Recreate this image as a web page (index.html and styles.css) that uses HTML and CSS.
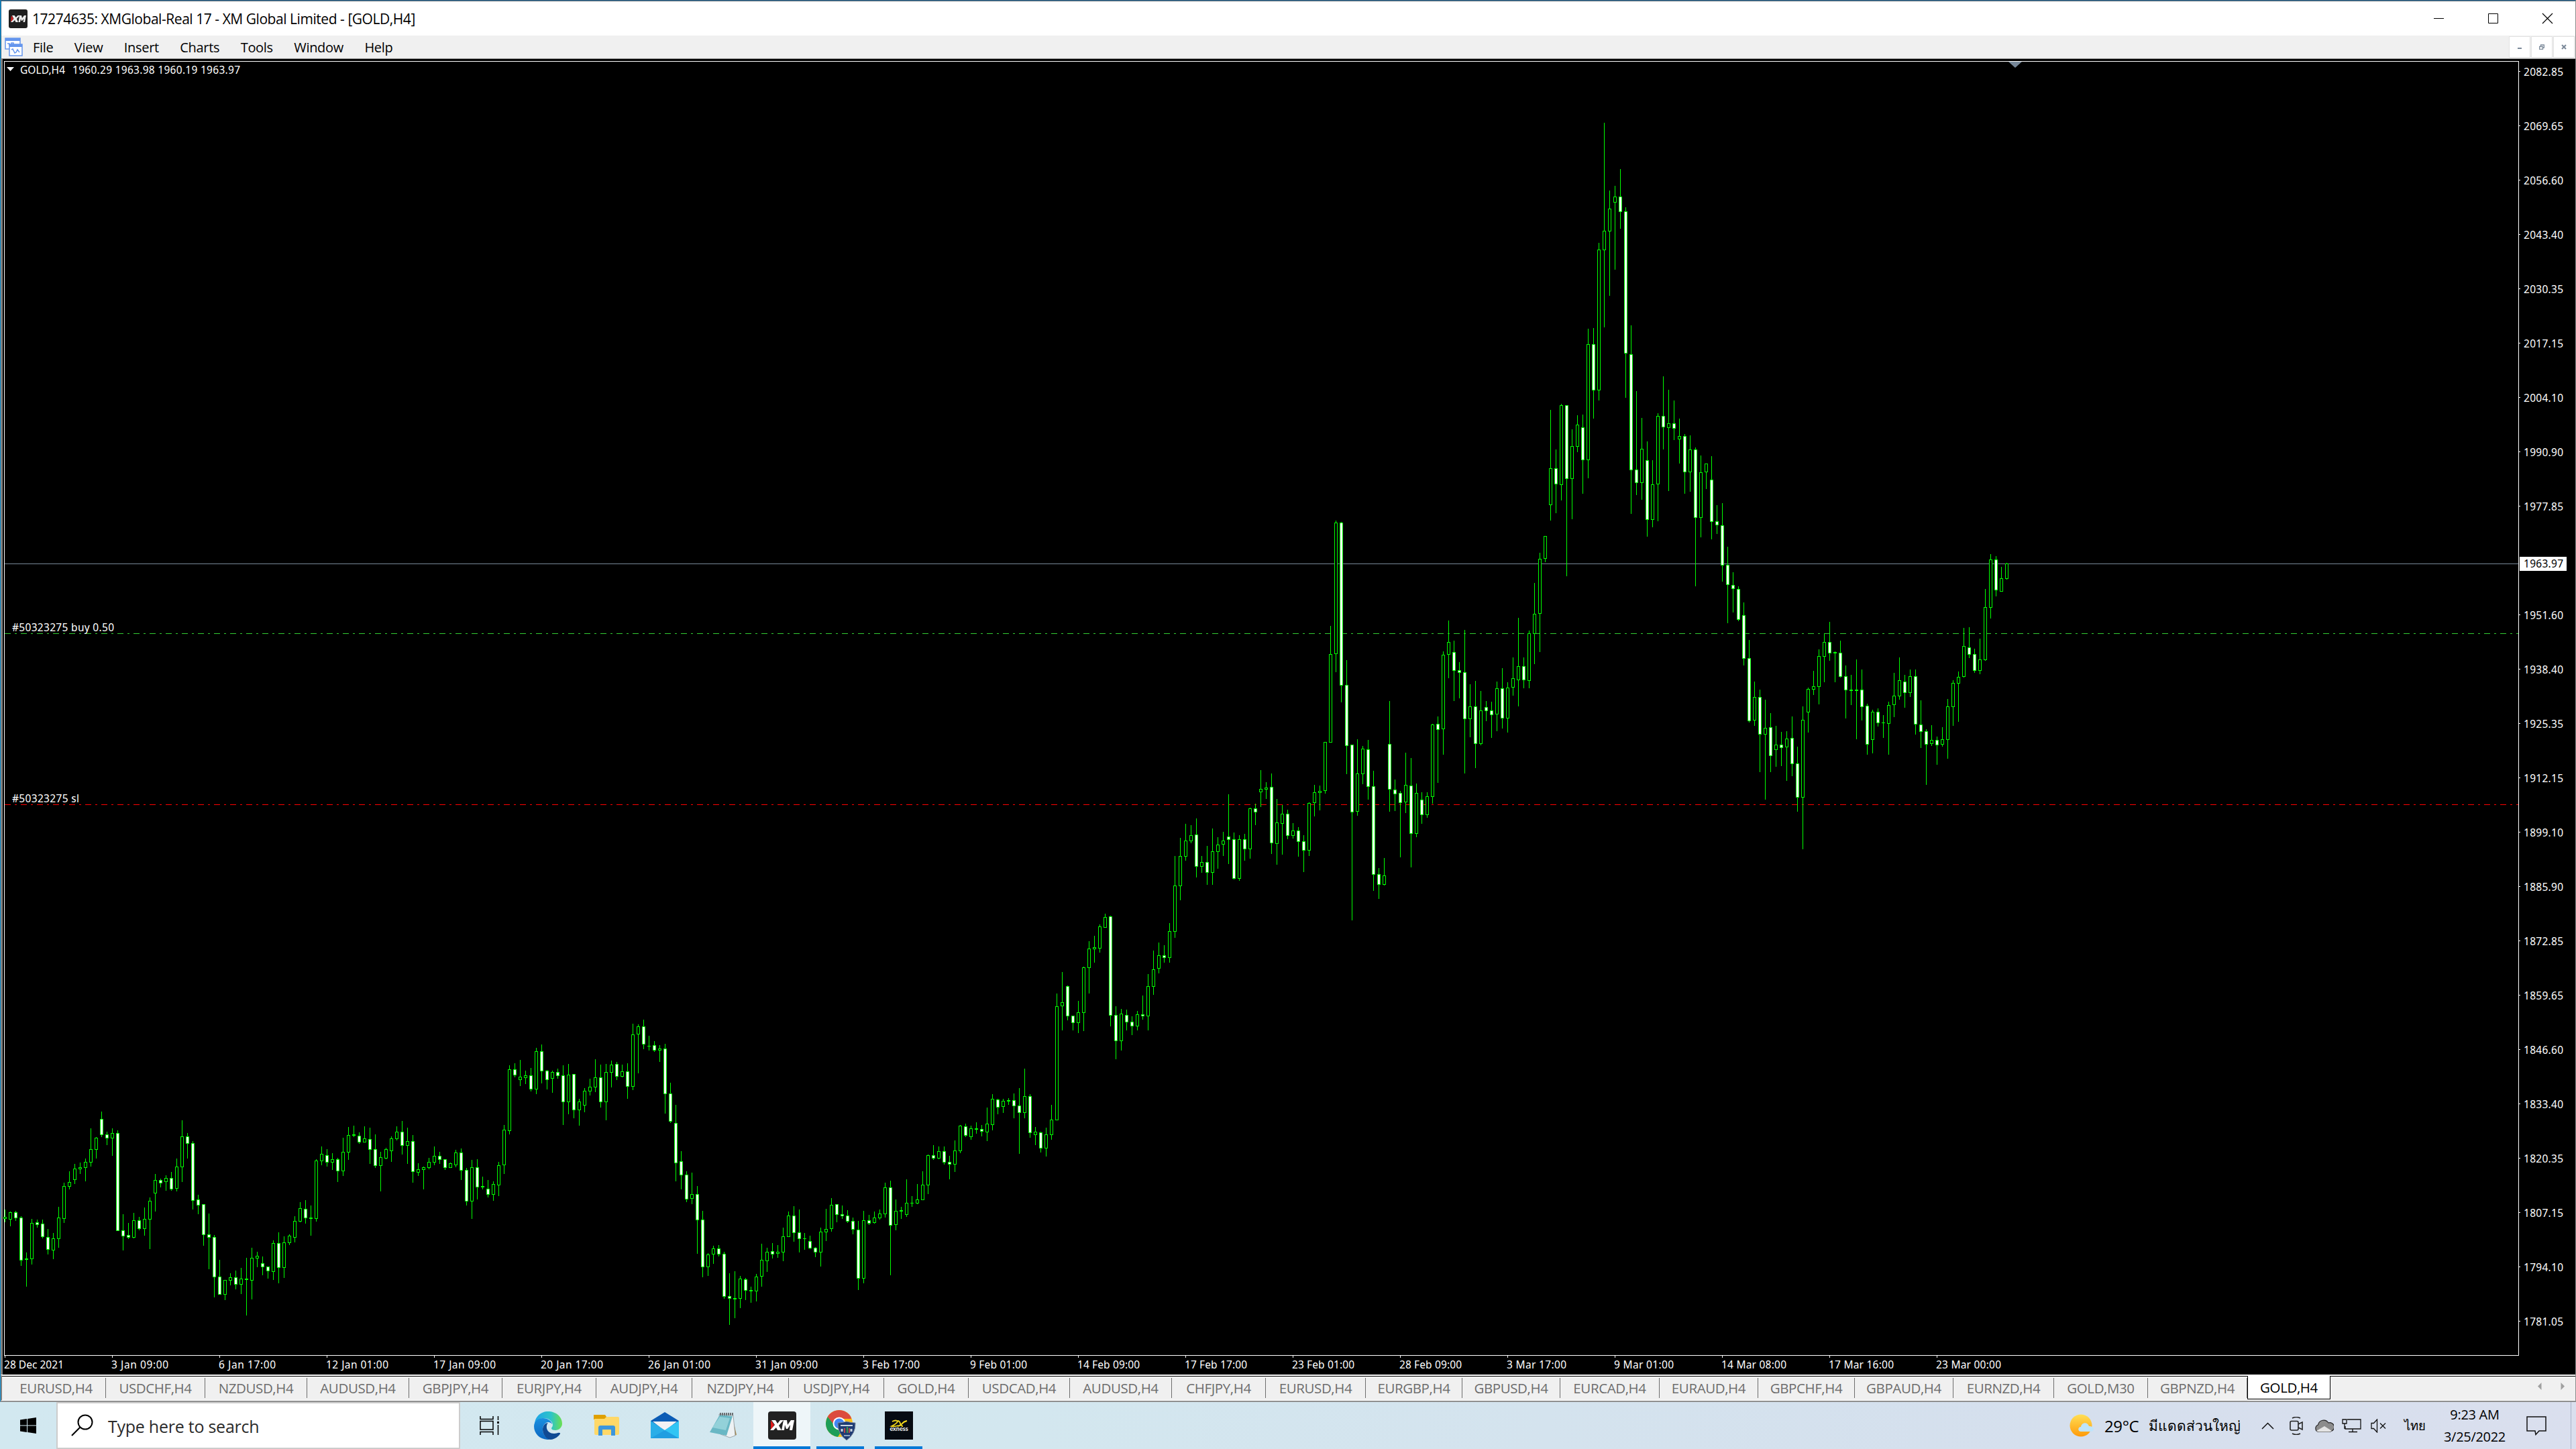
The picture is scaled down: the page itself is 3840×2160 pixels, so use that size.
FILE: index.html
```html
<!DOCTYPE html>
<html lang="en">
<head>
  <meta charset="UTF-8">
  <title>17274635: XMGlobal-Real 17 - XM Global Limited - [GOLD,H4]</title>
  <link rel="stylesheet" href="styles.css">
</head>
<body>
  <div class="window">
    <div class="titlebar">
      <svg class="app-icon" width="28" height="28" viewBox="0 0 28 28">
        <rect width="28" height="28" rx="3" fill="#1e1e1e"/>
        <path d="M4 9l3 5-4 5z" fill="#e02020"/>
        <path d="M5 9h3.600l2 3 3-3h3L12 14l2 5h-3.500l-1.500-3-3 3H3l4.500-5zM16 9h3l1 4 3-4h3l-2 10h-2.500l1-5-2.500 3h-1l-1-3-1 5h-2.500z" fill="#eee"/>
      </svg>
      <span class="title-text">17274635: XMGlobal-Real 17 - XM Global Limited - [GOLD,H4]</span>
      <svg class="win-buttons" width="180" height="18" viewBox="0 0 180 18">
        <path d="M0 8.500h15M81.500 1.500h14v14h-14z" fill="none" stroke="#000" stroke-width="1"/>
        <path d="M162 1l15 15M177 1l-15 15" fill="none" stroke="#000" stroke-width="1.200"/>
      </svg>
    </div>

    <div class="menubar">
      <svg class="mdi-icon" width="28" height="28" viewBox="0 0 28 28">
        <path d="M1 1h22v16H1z" fill="#fff" stroke="#6495ed" stroke-width="1.500"/>
        <path d="M1 1h22v4H1z" fill="#6495ed"/>
        <path d="M4 9h3v2h3v-3h3v2" fill="none" stroke="#6495ed" stroke-width="1.500"/>
        <path d="M7 10h19v17H7z" fill="#fff" stroke="#6495ed" stroke-width="1.500"/>
        <path d="M7 10h19v4H7z" fill="#6495ed"/>
        <path d="M10 18l2-1 3 6 2-1 2-4 3 4" fill="none" stroke="#6495ed" stroke-width="1.500"/>
      </svg>
      <nav class="menu">
        <span>File</span><span>View</span><span>Insert</span><span>Charts</span><span>Tools</span><span>Window</span><span>Help</span>
      </nav>
      <div class="mdi-buttons">
        <span class="mdi-btn"><svg width="8" height="8"><path d="M1 5h6v2H1z" fill="#7b8999"/></svg></span>
        <span class="mdi-btn"><svg width="8" height="8"><path d="M2.500 3V1h5v4H6M.5 3.500h5v4h-5z" fill="none" stroke="#7b8999" stroke-width="1.300"/></svg></span>
        <span class="mdi-btn"><svg width="8" height="8"><path d="M1 1l6 6M7 1L1 7" stroke="#7b8999" stroke-width="2"/></svg></span>
      </div>
    </div>

    <div class="chart-pane">
      <svg id="chart" width="3834" height="1961" viewBox="4 88 3834 1961">
        <rect x="4" y="88" width="3834" height="1961" fill="#000"/>
        <path class="frame" d="M6.500 2020V91.500H3754.500V2020.500H6"/>
        <path d="M2994 92h20l-10 9z" fill="#778899"/>
        <path class="price-line" d="M7 840.500H3754"/>
        <path class="order-line buy" d="M7 944.500H3754"/>
        <path class="order-line sl" d="M7 1199.500H3754"/>
        <g id="candles"></g>
        <path d="M10 100h11l-5.500 6z" fill="#fff"/>
        <text x="30" y="110" textLength="67">GOLD,H4</text>
        <text x="108" y="110" textLength="250">1960.29 1963.98 1960.19 1963.97</text>
        <text x="18" y="941" textLength="152">#50323275 buy 0.50</text>
        <text x="18" y="1196" textLength="100">#50323275 sl</text>
        <g id="prices"></g>
        <g id="times"></g>
        <rect x="3756" y="830" width="70" height="21" fill="#fff"/>
        <text class="last" x="3762" y="846" textLength="59">1963.97</text>
      </svg>
    </div>

    <div class="tabs" id="tabs"></div>
  </div>

  <div class="taskbar">
    <div class="start">
      <svg width="24" height="24" viewBox="0 0 24 24"><path d="M0 3.500l10-1.400v9.400H0zM11 2l13-2v11.500H11zM0 12.500h10v9.400L0 20.500zM11 12.500h13V24l-13-2z" fill="#000"/></svg>
    </div>
    <div class="search">
      <svg width="34" height="34" viewBox="0 0 34 34"><circle cx="21" cy="12" r="10.500" fill="none" stroke="#000" stroke-width="2"/><path d="M13.500 19.500L1 32" stroke="#000" stroke-width="2.200"/></svg>
      <span>Type here to search</span>
    </div>
    <div class="apps">
      <div class="app taskview">
        <svg width="30" height="28" viewBox="0 0 30 28"><path d="M1 0v4.500h19V0M1 28v-4.500h19V28M1 7.500h19v12.500H1zM27.500 0v6M27.500 13v15" fill="none" stroke="#000" stroke-width="1.500"/><rect x="26" y="8" width="3" height="3"/></svg>
      </div>
      <div class="app">
        <svg width="42" height="42" viewBox="0 0 42 42">
          <defs>
            <linearGradient id="eg1" x1="0" x2="1"><stop offset="0" stop-color="#1fa4e8"/><stop offset=".6" stop-color="#2ec4c8"/><stop offset="1" stop-color="#6be04f"/></linearGradient>
            <linearGradient id="eg2" x1="0" y1="0" x2="0" y2="1"><stop offset="0" stop-color="#1a8fe0"/><stop offset="1" stop-color="#0b66c0"/></linearGradient>
          </defs>
          <path d="M1 20C1 8 10 0 21 0c12 0 21 8 21 18 0 6-5 10-10 10-4 0-6-1-6-3 0-1 2-2 2-5 0-5-6-10-13-10C8 10 3 14 1 20z" fill="url(#eg1)"/>
          <path d="M0 22c0-8 7-12 13-12 8 0 14 5 14 9-1-2-4-3-6-3-4 0-8 5-8 11 0 7 5 13 11 15C10 43 0 34 0 22z" fill="url(#eg2)"/>
          <path d="M13 27c0-6 4-10 8-10-4 4-3 16 9 16 4 0 6-2 8-1 2 0 1 2-1 4-4 4-9 6-13 6-6-1-11-8-11-15z" fill="#0f4a94"/>
        </svg>
      </div>
      <div class="app">
        <svg width="38" height="32" viewBox="0 0 38 32"><path d="M0 0h17l2 3v4H0z" fill="#dfa000"/><path d="M1 6h15l3-3h17q2 0 2 2v23q0 2-2 2H3q-2 0-2-2z" fill="#ffd868"/><path d="M7 31V19q0-3 3-3h19q3 0 3 3v12h-6v-9H13v9z" fill="#3c96dc"/></svg>
      </div>
      <div class="app">
        <svg width="42" height="40" viewBox="0 0 42 40"><path d="M0 13L21 0l21 13v9H0z" fill="#0b5cb5"/><path d="M3 14h36L21 28z" fill="#f2f2f4"/><path d="M0 13l21 14 21-14v26H0z" fill="#2aaee8"/><path d="M21 27l21-14v26z" fill="#31c5f4"/><path d="M21 27l21 12H0z" fill="#1b93dc" opacity=".6"/></svg>
      </div>
      <div class="app">
        <svg width="40" height="38" viewBox="0 0 40 38"><path d="M33 3l7 30-6 2z" fill="#a98b50"/><path d="M14 2l21 2 3 30-8 3-14-5z" fill="#eef2f4" stroke="#8a949a" stroke-width=".8"/><path d="M15 3l19 2-9 29L0 29z" fill="#69b7c4"/><path d="M15 6l15 2-6 18L4 22z" fill="#a5dbe2" opacity=".7"/><path d="M15 2h20" stroke="#6a6f72" stroke-width="4" stroke-dasharray="2 1"/></svg>
      </div>
      <div class="app active xm">
        <svg width="42" height="42" viewBox="0 0 42 42"><rect width="42" height="42" rx="4" fill="#222"/><path d="M4 13l5 7-5 8z" fill="#e01b1b"/><path d="M5 13h6l3 5 4-5h5l-7 8 4 7h-6l-2-4-4 4H3l7-8zM23 13h5l1 7 5-7h5l-3 15h-4l1-8-4 6h-2l-2-6-1 8h-4z" fill="#fff"/></svg>
      </div>
      <div class="app running chrome">
        <svg width="46" height="46" viewBox="0 0 46 46">
          <circle cx="20" cy="20" r="20" fill="#fbc117"/>
          <path d="M2.700 10A20 20 0 0 1 37.300 10L38 13H20L12 24z" fill="#dc4b3e"/>
          <path d="M2.700 10A20 20 0 0 0 18 40l9-15-13-1z" fill="#1e9e58"/>
          <circle cx="20" cy="20" r="9.500" fill="#fff"/><circle cx="20" cy="20" r="7.500" fill="#4285f4"/>
          <path d="M18 19q6 0 13-2 7 2 13 2 1 16-13 26-14-10-13-26z" fill="#1f3c74" stroke="#7d8a9c"/>
          <path d="M22 23h18" stroke="#c9d5e0" stroke-width="2"/><path d="M24 28v4M38 28v4" stroke="#c9d5e0" stroke-width="3"/><path d="M28 27v7" stroke="#b94a48" stroke-width="2"/><path d="M32 25v9" stroke="#3f9a4c" stroke-width="2"/><path d="M35 27v7" stroke="#b94a48" stroke-width="2"/><path d="M27 38h9" stroke="#8fa6bf" stroke-width="2"/>
        </svg>
      </div>
      <div class="app running">
        <svg width="42" height="42" viewBox="0 0 42 42"><rect width="42" height="42" fill="#060b12"/><path d="M11 15q6-3 8 0-1 3-9 7 5 1 10-1M19 14q3 0 4 4 1 4 4 4M33 14q-5 1-8 5-3 3-6 3" fill="none" stroke="#f5d91c" stroke-width="1.800"/><text x="21" y="29" class="exness">exness</text></svg>
      </div>
    </div>
    <div class="tray">
      <svg class="t-sun" width="37" height="34" viewBox="0 0 37 34"><defs><linearGradient id="sun" x1="0" y1="0" x2="0" y2="1"><stop offset="0" stop-color="#ffdf55"/><stop offset="1" stop-color="#ff9a0a"/></linearGradient></defs><circle cx="17" cy="17" r="16.500" fill="url(#sun)"/><path d="M17 26c-5 0-5-7 0-7 1-7 10-8 12-1 9 0 9 8 2 8z" fill="#bfe4fa"/></svg>
      <span class="t-temp">29°C</span>
      <span class="t-cond">มีแดดส่วนใหญ่</span>
      <svg class="t-up" width="19" height="11"><path d="M1 10l8.500-8.500L18 10" fill="none" stroke="#111" stroke-width="1.500"/></svg>
      <svg class="t-cam" width="21" height="27" viewBox="0 0 21 27" fill="none" stroke="#222" stroke-width="1.600"><rect x="1" y="6.500" width="12" height="13.500" rx="2"/><path d="M13 11l6-3v11l-6-3M4 2q6-3 12 0M4 25q6 3 12 0"/></svg>
      <svg class="t-cloud" width="29" height="21" viewBox="0 0 29 21"><path d="M6 19.500a5.500 5.500 0 0 1-.5-10.500A8.500 8.500 0 0 1 21 6a6.500 6.500 0 0 1 4 12.500l-2 1z" fill="#8c8c8c" stroke="#222" stroke-width="1.200"/><path d="M3 18l12-7 11 7-3 1.500H6z" fill="#e4e4e4"/></svg>
      <svg class="t-net" width="29" height="21" viewBox="0 0 29 21" fill="none" stroke="#111" stroke-width="1.300"><path d="M8 1h20v14H5V11M16 15v4M10 19.500h13M1 1h6v6H1zM4 7v8"/></svg>
      <svg class="t-vol" width="24" height="21" viewBox="0 0 24 21" fill="none" stroke="#111" stroke-width="1.300"><path d="M1 6.500h3.500l5-5.500v19l-5-5.500H1zM14 6.500l8 8M22 6.500l-8 8"/></svg>
      <span class="t-lang">ไทย</span>
      <div class="clock"><span class="c-time">9:23 AM</span><span class="c-date">3/25/2022</span></div>
      <svg class="t-note" width="30" height="29" viewBox="0 0 30 29"><path d="M1 1h28v21H19l-5 5.500-1-5.500H1z" fill="none" stroke="#111" stroke-width="1.500"/></svg>
      <div class="show-desktop"></div>
    </div>
  </div>

  <script src="chart.js"></script>
</body>
</html>
```
FILE: styles.css
```css
* {
  box-sizing: border-box;
}
html, body {
  margin: 0;
  width: 3840px;
  height: 2160px;
  overflow: hidden;
}
body {
  display: flex;
  flex-direction: column;
  background: #1c6590;
  font-family: "Open Sans", "Noto Sans", sans-serif;
  font-size: 20px;
  color: #000;
}
.window {
  height: 2090px;
  flex: none;
  display: flex;
  flex-direction: column;
  border-top: 1px solid #24618c;
  border-left: 1px solid #0a8ccf;
  border-right: 1px solid #8a8a8a;
  border-bottom: 2px solid #8f8f8f;
}

/* title bar */
.titlebar {
  height: 52px;
  border-top: 1px solid #5d6b75;
  border-left: 1px solid #2b5f80;
  background: #fff;
  display: flex;
  align-items: center;
  padding: 1px 31px 0 11px;
}
.title-text {
  margin-left: 7px;
  font-size: 21px;
  letter-spacing: -0.45px;
  white-space: pre;
}
.win-buttons {
  margin-left: auto;
}

/* menu */
.menubar {
  height: 34px;
  background: #f0f0f0;
  border-left: 1px solid #2b5f80;
  display: flex;
  align-items: center;
  padding-left: 5px;
}
.menu {
  display: flex;
  gap: 31.4px;
  margin-left: 14px;
  letter-spacing: -0.3px;
}
.mdi-buttons {
  margin-left: auto;
  display: flex;
  gap: 1px;
  padding-right: 1px;
}
.mdi-btn {
  width: 32px;
  height: 32px;
  background: #fff;
  border: 1px solid #e3e3e3;
  display: flex;
  align-items: center;
  justify-content: center;
}

/* chart */
.chart-pane {
  flex: none;
  height: 1962px;
  border-top: 1px solid #8c8c8c;
  border-left: 3px solid #808080;
  background: #000;
}
#chart {
  display: block;
}
#chart text {
  font-family: "Noto Sans", sans-serif;
  font-size: 15.5px;
  fill: #fff;
}
#chart .last {
  fill: #000;
}
.frame {
  fill: none;
  stroke: #fff;
}
.price-line {
  stroke: #778899;
}
.order-line {
  stroke-dasharray: 9 6 3 6;
}
.buy {
  stroke: #32cd32;
}
.sl {
  stroke: #ff0000;
}
#candles, .frame, .price-line, .order-line {
  shape-rendering: crispEdges;
}
#candles .wick {
  fill: #00ff00;
}
#candles .up {
  fill: #000;
  stroke: #00ff00;
}
#candles .down {
  fill: #fff;
  stroke: #00ff00;
}

/* chart tabs */
.tabs {
  flex: 1;
  display: flex;
  background: #f0f0f0;
  border-top: 2px solid #fff;
  border-bottom: 1px solid #fff;
  border-left: 2px solid #808080;
  color: #6d6d6d;
  font-size: 20.500px;
}
.tab {
  flex: none;
  height: 35px;
  border-top: 1px solid #000;
  display: flex;
  align-items: center;
  justify-content: center;
  letter-spacing: -0.4px;
}
.tab:first-child {
  padding-left: 7px;
}
.tab::after {
  content: "";
  width: 1px;
  height: 30px;
  background: #6d6d6d;
  margin-left: auto;
}
.tab span {
  margin-left: auto;
}
.tab.current {
  background: #fff;
  color: #000;
  border: 1px solid #000;
  border-top: none;
}
.tab.current::after {
  width: 0;
}
.tab-arrows {
  flex: 1;
  height: 35px;
  border-top: 1px solid #000;
  padding: 9px 16px 0 0;
}
.tab-arrows svg {
  display: block;
  margin-left: auto;
}

/* taskbar */
.taskbar {
  height: 70px;
  display: flex;
  background: linear-gradient(90deg, #d2e8f0 0%, #d3e7ef 40%, #d5dfed 80%, #dadfee 100%);
}
.start {
  width: 84px;
  display: flex;
  align-items: center;
  justify-content: center;
}
.search {
  width: 602px;
  border: 2px solid #ccc;
  background: #fff;
  display: flex;
  align-items: center;
  padding-left: 20px;
  font-size: 25px;
  color: #2b2b2b;
}
.search span {
  margin: 2px 0 0 21px;
  letter-spacing: -0.25px;
}
.apps {
  display: flex;
}
.app {
  width: 87px;
  height: 70px;
  display: flex;
  align-items: center;
  justify-content: center;
}
.active {
  width: 85px;
  margin-left: 2px;
  background: #eef6f9;
  border-bottom: 4px solid #0078d7;
  padding-top: 4px;
}
.running {
  width: 71px;
  margin-left: 9px;
  border-bottom: 4px solid #0078d7;
  padding-top: 4px;
}
.chrome {
  padding-left: 3px;
}
.running + .running {
  margin-left: 16px;
}
.exness {
  font: bold 9px Lato, sans-serif;
  fill: #fff;
  text-anchor: middle;
}
.tray {
  margin-left: auto;
  display: flex;
  align-items: center;
  font-size: 20px;
}
.t-temp {
  margin-left: 15px;
  width: 66px;
  font-size: 24px;
  letter-spacing: -0.4px;
}
.t-cond {
  width: 136px;
  font-size: 21px;
  white-space: nowrap;
}
.t-up { margin-left: 32px; }
.t-cam { margin-left: 23px; }
.t-cloud { margin-left: 16px; }
.t-net { margin-left: 12px; }
.t-vol { margin-left: 14px; }
.t-lang {
  margin-left: 26px;
  width: 32px;
  font-size: 18.500px;
}
.clock {
  width: 126px;
  margin-left: 10px;
  display: flex;
  flex-direction: column;
  align-items: center;
  line-height: 33px;
  letter-spacing: -0.3px;
}
.t-note { margin-left: 14px; }
.show-desktop {
  width: 8px;
  height: 70px;
  margin-left: 36px;
  border-left: 1px solid #aab4c8;
}
```
FILE: chart.js
```js
var NS = 'http://www.w3.org/2000/svg';

// Bars are [high, body top, body bottom, low, filled], measured down from y in units of 1/k pixel
var runs = [
  { y: 1560, k: 1, bars: [
    [243,254,257,262,0],[246,247,258,268,0],[245,247,256,260,1],[253,255,319,327,1],[307,316,318,358,0],[257,263,317,325,0],
    [258,262,266,270,1],[258,264,284,286,1],[272,284,303,310,1],[278,286,304,317,0],[239,255,287,300,0],[203,208,257,263,0],
    [186,202,209,213,0],[175,182,199,205,0],[173,180,183,190,0],[167,172,181,201,0],[122,153,173,179,0],[135,136,154,167,0],
    [97,108,132,135,1],[127,131,137,147,1],[122,129,137,163,0],[125,129,275,275,1],[250,274,283,304,1],[263,281,285,287,1],
    [248,259,285,286,0],[254,259,272,274,1],[240,257,272,282,0],[225,230,258,302,0],[190,199,219,246,0],[197,199,204,210,1],
    [192,196,202,215,0],[187,196,213,215,1],[167,179,212,216,0],[110,134,180,202,0],[129,134,145,167,1],[141,144,230,243,1],
    [221,228,237,250,1],[235,235,281,297,1],[249,280,285,332,1],[281,284,344,374,1],[318,343,370,370,1],[348,348,370,378,0],
    [338,344,349,356,0],[334,344,355,362,1],[330,346,355,369,0],[315,346,348,401,0],[300,315,349,377,0],[306,312,316,329,0],
    [313,323,329,341,1],[328,328,335,346,1],[289,293,336,348,0],[277,293,330,353,1],[283,292,330,345,0],[280,282,293,296,0],
    [253,260,285,292,0],[232,241,261,262,0],[229,242,256,264,1],[237,255,257,282,0],[168,170,257,261,0]
  ]},
  { y: 1480, k: 3, bars: [
    [687,720,753,771,0],[699,726,759,777,1],[717,744,759,792,0],[738,744,798,846,1],[648,711,798,819,0],[600,636,714,747,0],
    [594,633,639,645,0],[624,639,669,675,1],[597,651,669,669,0],[603,654,702,765,1],[633,699,774,783,1],[711,735,774,888,0],
    [693,699,741,744,0],[642,651,708,756,0],[597,621,654,660,0],[573,621,684,723,1],[603,663,684,765,0],[636,663,801,849,1],
    [762,789,804,819,0],[777,780,792,879,0],[738,756,783,789,0],[687,729,759,771,0],[711,729,747,765,1],[744,744,783,792,1],
    [759,762,783,783,0],[702,714,771,780,0],[696,714,795,837,1],[783,792,933,951,1],[747,780,933,1011,0],[744,780,870,924,1],
    [822,864,870,879,0],[837,876,903,915,1],[843,855,903,930,0],[756,771,861,909,0],[591,612,771,810,0],[324,342,618,633,0],
    [315,342,369,378,1],[300,375,390,417,0],[348,369,381,408,0],[336,369,432,441,1],[246,261,432,453,0],[231,261,351,405,1],
    [345,348,390,432,1],[348,354,384,447,0],[339,354,372,384,1],[324,369,489,591,1],[318,366,489,543,0],[363,363,525,561,1],
    [474,486,525,594,0],[426,438,504,534,0],[384,420,441,459,0],[297,378,423,444,0],[321,378,489,513,1],[318,354,489,570,0]
  ]},
  { y: 1500, k: 3, bars: [
    [243,261,297,363,0],[249,258,315,330,1],[261,291,315,318,0],[255,291,360,414,1],[78,126,360,375,0],[81,90,126,300,0],
    [60,90,171,192,1],[132,177,180,198,0],[156,174,198,204,1],[174,189,198,249,0],[168,189,393,480,1],[342,390,516,522,1],
    [441,522,702,783,1],[648,693,756,819,1],[738,753,864,876,1],[744,840,861,885,0],[804,840,957,1107,1],[915,954,1167,1212,1],
    [1104,1110,1167,1206,0],[1071,1083,1110,1152,0],[1068,1083,1110,1119,1],[1098,1107,1299,1308,1],[1194,1296,1308,1425,1],[1185,1305,1311,1395,0],
    [1206,1218,1308,1350,0],[1215,1221,1272,1314,1],[1254,1269,1275,1326,0],[1197,1209,1275,1320,0],[1062,1134,1209,1254,0],[1080,1098,1140,1188,0],
    [1059,1095,1110,1128,1],[1068,1098,1107,1125,0],[990,1029,1101,1140,0],[918,936,1032,1032,0],[894,936,1014,1053,1],[909,1011,1041,1101,1],
    [1014,1038,1041,1089,0],[1026,1050,1083,1086,1],[1077,1080,1101,1122,1],[990,1008,1101,1164,0],[906,996,1011,1050,0],[858,888,996,1008,0],
    [885,885,933,966,1],[891,930,939,951,1],[912,936,963,969,1],[945,960,999,1020,1],[960,999,1218,1269,1],[915,957,1218,1239,0],
    [933,957,972,978,1],[918,945,969,972,0],[909,927,948,954,0],[789,810,930,945,0],[780,810,981,1203,1],[864,915,978,1002,0],
    [897,912,918,951,0],[774,879,933,942,0],[849,879,882,897,0],[795,864,882,885,0],[738,798,867,867,0],[663,666,801,840,0]
  ]},
  { y: 1340, k: 3, bars: [
    [1101,1146,1161,1167,1],[1107,1128,1161,1164,0],[1107,1128,1179,1188,1],[1149,1176,1188,1254,1],[1080,1125,1188,1221,0],[1011,1014,1128,1137,0],
    [1005,1017,1059,1065,1],[1014,1026,1065,1077,0],[999,1026,1032,1050,0],[1011,1029,1041,1062,1],[933,1005,1044,1083,0],[873,894,1011,1035,0],
    [894,897,933,963,1],[894,903,930,957,0],[891,900,906,921,0],[870,900,927,981,1],[846,924,957,1140,1],[759,882,957,981,0],
    [873,882,1047,1068,1],[1020,1041,1056,1101,0],[1041,1044,1116,1134,1],[1023,1053,1116,1152,0],[921,987,1056,1077,0],[423,480,990,990,0],
    [327,462,480,588,0],[387,390,525,543,1],[522,522,555,588,1],[456,507,555,600,0],[303,306,510,591,0],[189,222,309,423,0],
    [165,216,225,285,0],[114,123,222,240,0],[66,81,129,129,0],[75,78,522,570,1],[480,519,636,717,1],[492,513,636,678,0],
    [495,519,552,588,1],[525,549,570,609,1],[501,516,570,588,0],[432,516,525,540,1],[336,390,525,588,0],[231,315,393,429,0],
    [195,252,312,333,0],[207,252,264,285,1],[108,144,264,285,0]
  ]},
  { y: 760, k: 2.45, bars: [
    [1264,1372,1541,1563,0],[1198,1265,1374,1426,0],[1147,1208,1267,1281,0],[1151,1188,1210,1218,0],[1127,1186,1303,1343,1],[1264,1286,1303,1325,0],
    [1227,1286,1325,1370,1],[1164,1247,1325,1370,0],[1196,1223,1249,1311,0],[1176,1208,1223,1264,0],[1039,1193,1205,1294,1],[1178,1203,1347,1350,1],
    [1188,1203,1347,1355,0],[1183,1203,1240,1281,1],[1088,1090,1240,1274,0],[1073,1090,1105,1151,1],[951,1019,1031,1085,0],[995,1014,1022,1056,0],
    [963,1012,1218,1257,1],[1056,1142,1220,1296,0],[1078,1110,1147,1259,0],[1095,1110,1191,1203,1],[1144,1171,1191,1200,0],[1159,1171,1213,1267,1],
    [1188,1210,1245,1323,1],[1068,1071,1245,1264,0],[1004,1031,1071,1120,0],[1007,1027,1034,1098,0],[848,848,1027,1036,0],[424,527,850,850,0],
    [39,47,527,593,0],[44,47,642,703,1],[549,639,862,965,1],[857,857,1105,1499,1],[838,963,1102,1117,0],[862,872,965,1002,0],
    [840,875,1012,1058,1],[953,1009,1333,1392,1],[1308,1330,1370,1421,1],[1272,1335,1370,1372,0],[698,855,1022,1102,1],[985,1022,1039,1100,1],
    [1027,1034,1071,1269,1],[887,1004,1068,1107,0],[906,1007,1183,1306,1],[1000,1034,1183,1196,0],[1031,1058,1115,1147,1],[1031,1046,1115,1125,0],
    [782,784,1049,1073,0],[755,782,804,997,1],[517,529,801,894,0],[404,483,529,615,0],[478,519,588,698,1],[556,586,595,688,1],
    [439,593,764,963,1],[637,718,764,831,0],[625,718,855,943,1]
  ]},
  { y: 160, k: 1.42545, bars: [
    [1240,1281,1353,1356,0],[1262,1274,1283,1304,1],[1263,1281,1291,1340,1],[1220,1234,1290,1326,0],[1192,1234,1299,1320,1],[1222,1233,1299,1329,0],
    [1169,1213,1233,1250,0],[1085,1187,1217,1273,0],[1169,1187,1217,1234,1],[1112,1118,1219,1234,0],[1011,1076,1119,1183,0],[947,959,1076,1157,0],
    [911,911,959,966,0],[643,767,845,878,0],[727,767,801,862,1],[630,633,803,835,0],[633,633,790,996,1],[684,720,790,875,0],
    [654,674,721,733,0],[653,680,750,821,1],[470,503,750,788,0],[469,503,602,661,1],[288,302,602,623,0],[33,262,304,468,0],
    [177,215,264,401,0],[167,190,202,345,0],[131,190,222,258,1],[212,221,523,617,1],[463,525,771,864,1],[603,770,798,824,1],
    [660,726,798,834,0],[710,750,877,912,1],[750,801,877,892,0],[650,656,801,880,0],[572,656,680,727,1],[600,671,681,815,0],
    [623,671,683,707,1],[661,698,706,757,0],[694,698,775,821,1],[697,727,775,817,0],[723,727,872,1018,1],[740,775,872,914,0],
    [757,757,776,811,0]
  ]},
  { y: 600, k: 2.30588, bars: [
    [184,265,410,470,1],[353,408,422,452,1],[346,422,560,616,1],[496,558,627,759,1],[583,627,641,722,1],[632,641,747,752,1],
    [687,731,881,904,1],[816,879,1095,1100,1],[959,1012,1093,1111,0],[987,1012,1141,1271,1],[1022,1118,1141,1365,0],[1068,1116,1215,1271,1],
    [1111,1176,1194,1252,0],[1132,1176,1188,1250,1],[1130,1155,1185,1301,0],[1079,1153,1243,1284,1],[1183,1241,1358,1407,1],[1045,1091,1358,1536,0],
    [980,985,1065,1134,0],[922,975,987,1005,0],[849,872,978,1038,0],[793,823,874,962,0],[754,823,862,888,1],[855,858,862,962,0],
    [819,860,943,945,1],[904,941,989,1086,1],[936,987,992,1040,0],[883,987,992,1158,0],[918,987,1047,1093,1],[1035,1042,1176,1211,1],
    [1056,1063,1160,1206,0],[1051,1063,1102,1114,1],[1075,1100,1102,1153,0],[1028,1040,1104,1211,0],[929,1008,1040,1081,0],[876,955,1010,1022,0],
    [936,959,998,1049,1],[918,941,998,1012,0],[918,941,1107,1141,1],[1024,1107,1132,1188,1],[1123,1130,1176,1314,1],[1109,1160,1174,1181,0],
    [1148,1160,1178,1245,1],[1116,1158,1176,1183,0],[1019,1045,1160,1224,0],[955,964,1047,1111,0],[925,943,966,1098,0],[775,837,943,945,0],
    [772,842,867,879,1],[846,865,922,929,1],[812,883,922,934,0],[641,703,885,888,0],[521,540,706,742,0],[528,540,646,666,1],
    [565,604,650,650,0],[551,553,606,609,0]
  ]}
];

var prices = ['2082.85', '2069.65', '2056.60', '2043.40', '2030.35', '2017.15', '2004.10', '1990.90', '1977.85', '',
  '1951.60', '1938.40', '1925.35', '1912.15', '1899.10', '1885.90', '1872.85', '1859.65', '1846.60', '1833.40',
  '1820.35', '1807.15', '1794.10', '1781.05'];

var times = ['28 Dec 2021', '3 Jan 09:00', '6 Jan 17:00', '12 Jan 01:00', '17 Jan 09:00', '20 Jan 17:00', '26 Jan 01:00',
  '31 Jan 09:00', '3 Feb 17:00', '9 Feb 01:00', '14 Feb 09:00', '17 Feb 17:00', '23 Feb 01:00', '28 Feb 09:00',
  '3 Mar 17:00', '9 Mar 01:00', '14 Mar 08:00', '17 Mar 16:00', '23 Mar 00:00'];

// [name, width]
var tabs = [['EURUSD,H4', 155], ['USDCHF,H4', 148], ['NZDUSD,H4', 152], ['AUDUSD,H4', 152], ['GBPJPY,H4', 139],
  ['EURJPY,H4', 140], ['AUDJPY,H4', 143], ['NZDJPY,H4', 144], ['USDJPY,H4', 142], ['GOLD,H4', 126], ['USDCAD,H4', 151],
  ['AUDUSD,H4', 152], ['CHFJPY,H4', 140], ['EURUSD,H4', 149], ['EURGBP,H4', 144], ['GBPUSD,H4', 146], ['EURCAD,H4', 148],
  ['EURAUD,H4', 147], ['GBPCHF,H4', 144], ['GBPAUD,H4', 147], ['EURNZD,H4', 150], ['GOLD,M30', 140], ['GBPNZD,H4', 148],
  ['GOLD,H4', 124]];

function add(parent, tag, attrs, text) {
  var el = document.createElementNS(NS, tag);
  for (var a in attrs) el.setAttribute(a, attrs[a]);
  if (text) el.textContent = text;
  parent.appendChild(el);
}

var candles = document.getElementById('candles');
var x = 7;
runs.forEach(function (run) {
  run.bars.forEach(function (bar) {
    var p = bar.slice(0, 4).map(function (v) { return Math.round(run.y + v / run.k); });
    var h = Math.max(p[2] - p[1], 1);
    add(candles, 'rect', { 'class': 'wick', x: x, y: p[0], width: 1, height: p[3] - p[0] });
    if (h < 3) {
      add(candles, 'rect', { 'class': 'wick', x: x - 2, y: p[1], width: 5, height: h });
    } else {
      add(candles, 'rect', { 'class': bar[4] ? 'down' : 'up', x: x - 1.5, y: p[1] + 0.5, width: 4, height: h - 1 });
    }
    x += 8;
  });
});

prices.forEach(function (price, i) {
  if (!price) return;
  var y = 106 + i * 81;
  var g = document.getElementById('prices');
  add(g, 'rect', { x: 3755, y: y, width: 2, height: 1, fill: '#fff' });
  add(g, 'text', { x: 3762, y: y + 7, textLength: 59 }, price);
});

times.forEach(function (time, i) {
  var g = document.getElementById('times');
  var w = time.length === 12 ? 93 : 85;
  if (i === 0) w = 89;
  if (time.indexOf('Mar') > 0) w += 4;
  add(g, 'rect', { x: 7 + i * 160, y: 2021, width: 1, height: 3, fill: '#fff' });
  add(g, 'text', { x: 6 + i * 160, y: 2040, textLength: w }, time);
});

var bar = document.getElementById('tabs');
tabs.forEach(function (t, i) {
  var tab = document.createElement('div');
  tab.className = i === tabs.length - 1 ? 'tab current' : 'tab';
  tab.style.width = t[1] + 'px';
  tab.innerHTML = '<span>' + t[0] + '</span>';
  bar.appendChild(tab);
});
bar.insertAdjacentHTML('beforeend', '<div class="tab-arrows"><svg width="40" height="11"><path d="M5.500 0v11L0 5.500zM34.500 0v11l5.500-5.500z" fill="#a0a0a0"/></svg></div>');
```
